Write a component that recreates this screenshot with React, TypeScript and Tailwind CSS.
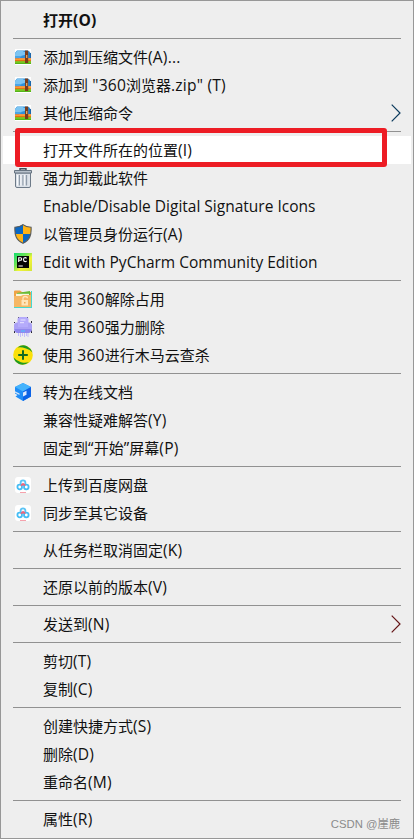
import React from "react";

function ZipIcon() {
  return (
    <svg width="16" height="16" viewBox="0 0 16 16" className="ml-[1px]">
      <rect width="16" height="16" fill="#fff" />
      <path d="M0 4l2-2.500h10.500l2 1L16 5v4H0z" fill="#2f8fd8" />
      <path d="M0 4.500L2 2h6l1 1h2v2.500L6 7 0 8z" fill="#7cc4f2" />
      <path d="M0 7h7L4 9.500H0z" fill="#4aa5e6" />
      <path d="M0 9.300h16V13H0z" fill="#e0640f" />
      <path d="M0 9.800h16v1.400H0z" fill="#fb9c2c" />
      <path d="M0 12.300h16v2.700H0z" fill="#55b31a" />
      <path d="M0 12.500h16v1H0z" fill="#93d82a" />
      <path d="M10 1.500h3.200v12.500H10z" fill="#7a3c1a" />
      <path d="M11.100 6h1.200v3h-1.200z" fill="#e9b070" />
      <path d="M14.500 4h1.500v5h-1.500z" fill="#1b66aa" />
    </svg>
  );
}

function TrashIcon() {
  return (
    <svg width="18" height="20" viewBox="0 0 18 20">
      <path d="M1.500 5h15v13q0 1.500-1.500 1.500H3q-1.500 0-1.500-1.500z" fill="#dce2e9" stroke="#6d7a88" />
      <path d="M5.500 7v10.500M9 7v10.500M12.500 7v10.500" stroke="#8f9ba9" strokeWidth="1.300" />
      <path d="M6.800 7v10.500M10.300 7v10.500M3.500 7v10.500" stroke="#f8fafc" />
      <path d="M6 2V.8h6V2" fill="none" stroke="#414d5a" strokeWidth="1.400" />
      <path d="M.5 2.500h17V5H.5z" fill="#b8c2cc" stroke="#687582" />
    </svg>
  );
}

function ShieldIcon() {
  return (
    <svg width="18" height="20" viewBox="0 0 18 20">
      <path d="M9 .6Q6 3 .9 3.200C.5 11 2 16 9 19.300 16 16 17.500 11 17.100 3.200 12 3 9 .6 9 .6z" fill="#ffb416" />
      <path d="M9 .6Q6 3 .9 3.200q-.2 3.800.5 6.800H9zM9 10h7.600Q15.300 16.300 9 19.300z" fill="#0b68c4" />
      <path d="M9 .6Q6 3 .9 3.200C.5 11 2 16 9 19.300 16 16 17.500 11 17.100 3.200 12 3 9 .6 9 .6z" fill="none" stroke="#575b5e" strokeWidth="1.100" />
    </svg>
  );
}

function PyCharmIcon() {
  return (
    <svg width="18" height="18" viewBox="0 0 18 18">
      <defs>
        <linearGradient id="pc" x1="0" y1="0" x2="1" y2="1">
          <stop offset="0" stopColor="#12db70" />
          <stop offset=".4" stopColor="#75e653" />
          <stop offset=".6" stopColor="#f3f438" />
          <stop offset="1" stopColor="#d3e53a" />
        </linearGradient>
      </defs>
      <path d="M0 0h18v18H0z" fill="url(#pc)" />
      <path d="M3 3h12v12H3z" fill="#050505" />
      <path d="M4.700 9V4.700h1.800q1.200 0 1.200 1.300T6.500 7.300H5M12.600 5.300q-.6-.7-1.500-.7-1.600 0-1.600 2t1.600 2q.9 0 1.500-.7M4.500 13h4.300" fill="none" stroke="#fff" strokeWidth="1.100" />
    </svg>
  );
}

function FolderIcon() {
  return (
    <svg width="18" height="18" viewBox="0 0 18 18">
      <path d="M17 1h1v17H0v-1h17z" fill="#45d8cf" />
      <path d="M0 1.500Q0 .5 1 .5h5L8 2h9v15H1q-1 0-1-1z" fill="#efa446" />
      <path d="M3 3l13-2v5H3z" fill="#69bb35" />
      <path d="M2 3.800h13V7H2z" fill="#f7f7df" />
      <path d="M0 6h7l2-1h8v12H1q-1 0-1-1z" fill="#f6b765" />
      <path d="M7.500 10h6.500v5.500H7.500z" fill="#ffe5bb" />
      <path d="M9 10V8.500q0-2 2.200-2t2.200 1.700" fill="none" stroke="#ffe5bb" strokeWidth="1.300" />
      <path d="M10.200 12h1.200v1.500h-1.200z" fill="#e99a38" />
    </svg>
  );
}

function ShredIcon() {
  return (
    <svg width="18" height="20" viewBox="0 0 18 20">
      <path d="M0 5h1v1H0zM17 4h1v2h-1zM0 14h1v2H0zM17 13h1v3h-1zM4 0h1v1H4zM13 0h1v1h-1z" fill="#24232e" />
      <path d="M3.500 2.500Q3.500 0 6 0h6q2.500 0 2.500 2.500V9h-11z" fill="#b5abfb" />
      <path d="M0 8.500q0-3 3-3h12q3 0 3 3V12q0 3.500-3.500 3.500h-11Q0 15.500 0 12z" fill="#aba1f5" />
      <path d="M4 5h10v5H4z" fill="#b5abfb" />
      <path d="M.5 12h17q-.5 4-3 4h-11q-2.500 0-3-4z" fill="#9189ee" />
      <path d="M6.500 3h5M6 5.700h4" stroke="#e9e5ff" />
      <path d="M7 14h4" stroke="#55b9ff" strokeWidth="1.300" />
      <path d="M4.500 16v3M6.500 16v4M8.500 16v3M10.500 16v4M12.500 16v3M14 16v4" stroke="#c3bdfa" />
    </svg>
  );
}

function GuardIcon() {
  return (
    <svg width="20" height="20" viewBox="0 0 20 20" className="-ml-[1px] shrink-0">
      <circle cx="10" cy="10" r="9.800" fill="#fbe00a" />
      <path d="M4.500 2.500Q9-1 14 1.200q4 2 5.500 6.300-2.500-3-6.500-4Q8 1.500 4.500 2.500zM.6 12.500q3 3.500 7.400 4.700 4.500 1.300 8-.2-4.500 4-10 2Q1.800 17 .6 12.500z" fill="#1f9a22" />
      <path d="M10 5.200v9.600M5.200 10h9.600" stroke="#126b23" strokeWidth="2" />
    </svg>
  );
}

function DocIcon() {
  return (
    <svg width="16" height="18" viewBox="0 0 16 18" className="ml-[1px]">
      <path d="M8 0l8 4v9.500L8 18l-7.500-4.500 2-1.500L0 10.500V4z" fill="#1f8df7" />
      <path d="M8 0l8 4-8 4.500L0 4z" fill="#45b3fc" />
      <path d="M8 8.500L16 4v9.500L8 18z" fill="#0b62e6" />
      <path d="M0 8.300l4.500 2.200v1.500L0 9.800z" fill="#cfe4fb" />
      <path d="M8 9.500l3.500-1.800v4L8 13.500z" fill="#dceaff" />
    </svg>
  );
}

function NetdiskIcon() {
  return (
    <svg width="16" height="16" viewBox="0 0 16 16" className="ml-[1px]">
      <rect width="16" height="16" rx="3" fill="#fff" />
      <g fill="none" strokeWidth="1.800">
        <circle cx="8" cy="5.700" r="2.400" stroke="#5cc4f5" />
        <circle cx="4.700" cy="10" r="2.300" stroke="#45bdf5" />
        <circle cx="11.300" cy="10" r="2.300" stroke="#45bdf5" />
        <path d="M6 8.600l2-1.600 2.200 1.600" stroke="#f0647a" />
      </g>
      <path d="M5 15.500h6" stroke="#f5a2ad" />
    </svg>
  );
}

type Item = {
  label: string;
  icon?: React.ReactNode;
  bold?: boolean;
  active?: boolean;
  arrow?: string;
};

const groups: Item[][] = [
  [{ label: "打开(O)", bold: true }],
  [
    { label: "添加到压缩文件(A)...", icon: <ZipIcon /> },
    { label: '添加到 "360浏览器.zip" (T)', icon: <ZipIcon /> },
    { label: "其他压缩命令", icon: <ZipIcon />, arrow: "#0b3a5c" },
  ],
  [
    { label: "打开文件所在的位置(I)", active: true },
    { label: "强力卸载此软件", icon: <TrashIcon /> },
    { label: "Enable/Disable Digital Signature Icons" },
    { label: "以管理员身份运行(A)", icon: <ShieldIcon /> },
    { label: "Edit with PyCharm Community Edition", icon: <PyCharmIcon /> },
  ],
  [
    { label: "使用 360解除占用", icon: <FolderIcon /> },
    { label: "使用 360强力删除", icon: <ShredIcon /> },
    { label: "使用 360进行木马云查杀", icon: <GuardIcon /> },
  ],
  [
    { label: "转为在线文档", icon: <DocIcon /> },
    { label: "兼容性疑难解答(Y)" },
    { label: "固定到“开始”屏幕(P)" },
  ],
  [
    { label: "上传到百度网盘", icon: <NetdiskIcon /> },
    { label: "同步至其它设备", icon: <NetdiskIcon /> },
  ],
  [{ label: "从任务栏取消固定(K)" }],
  [{ label: "还原以前的版本(V)" }],
  [{ label: "发送到(N)", arrow: "#641416" }],
  [{ label: "剪切(T)" }, { label: "复制(C)" }],
  [{ label: "创建快捷方式(S)" }, { label: "删除(D)" }, { label: "重命名(M)" }],
  [{ label: "属性(R)" }],
];

// Latin runs (quotes included) are set a little larger than the Chinese ones
function Label({ text }: { text: string }) {
  const runs = text.match(/[\x20-\x7e“”]+|[^\x20-\x7e“”]+/g) ?? [];
  if (runs.length === 1 && /^[A-Z]/.test(text)) {
    return <span className="text-[15.5px]">{text}</span>;
  }
  return (
    <>
      {runs.map((run, i) => (
        <span key={i} className={/[\x20-\x7e“”]/.test(run) ? "text-[15.6px] tracking-[0.2px]" : ""}>
          {run}
        </span>
      ))}
    </>
  );
}

function MenuRow({ item }: { item: Item }) {
  return (
    <div className={`relative mx-[2px] flex h-7 items-center pl-[11px] pr-[10px] ${item.active ? "bg-white" : ""}`}>
      <div className="flex w-[29px] shrink-0 items-center">{item.icon}</div>
      <span className={`whitespace-pre ${item.bold ? "font-bold" : "font-normal"}`}>
        <Label text={item.label} />
      </span>
      {item.arrow && (
        <svg width="10" height="18" viewBox="0 0 10 18" className="ml-auto">
          <path d="M.7.700L9 9 .7 17.300" fill="none" stroke={item.arrow} strokeWidth="1.200" />
        </svg>
      )}
      {item.active && (
        <div className="absolute left-[12px] -top-[8px] h-[39px] w-[372px] rounded-[3px] border-[5px] border-[#ed1c24]" />
      )}
    </div>
  );
}

export default function App() {
  return (
    <div className="relative h-[839px] w-[414px] border border-[#979797] bg-[#eeeeee] pt-[5px] font-['Open_Sans','Noto_Sans_CJK_SC',sans-serif] text-[15px] leading-7 text-[#111]">
      {groups.map((group, i) => (
        <div key={i}>
          {i > 0 && (
            <div className="flex h-[9px] items-center px-3">
              <div className="h-px w-full bg-[#919191]" />
            </div>
          )}
          {group.map((item) => (
            <MenuRow key={item.label} item={item} />
          ))}
        </div>
      ))}
      <div className="absolute bottom-[4px] right-[13px] font-['Liberation_Sans','Noto_Sans_CJK_SC',sans-serif] text-[11.3px] leading-5 text-[#8b8b8b]">
        CSDN @崖鹿
      </div>
    </div>
  );
}
